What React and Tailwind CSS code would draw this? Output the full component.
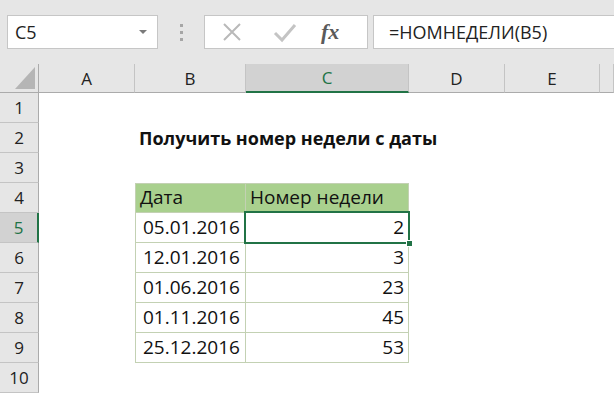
const cols = ["A", "B", "C", "D", "E", ""];
const widths = "grid-cols-[39px_96px_111px_163px_96px_95px_1fr]";

const data = [
  ["05.01.2016", 2],
  ["12.01.2016", 3],
  ["01.06.2016", 23],
  ["01.11.2016", 45],
  ["25.12.2016", 53],
];

function XIcon() {
  return (
    <svg width="22" height="22" viewBox="0 0 22 22">
      <path d="M3 3 L19 19 M19 3 L3 19" stroke="#b9b9b9" strokeWidth="2" fill="none" />
    </svg>
  );
}

function CheckIcon() {
  return (
    <svg width="24" height="22" viewBox="0 0 24 22">
      <path d="M2 12 L9 19 L22 4" stroke="#c4c4c4" strokeWidth="3" fill="none" />
    </svg>
  );
}

function Cell({ r, c }) {
  // r: row number 1..10, c: column index 0..5 (A..F)
  const inTable = r >= 4 && r <= 9 && (c === 1 || c === 2);
  let cls = "relative flex items-end overflow-visible";
  let content = null;

  if (inTable) {
    cls += " border-b border-r border-[#c3d1b3]";
    if (c === 1) cls += " border-l";
    if (r === 4) cls += " bg-[#a9d08e] border-t";
    if (r === 4) {
      content = <span className="pl-[4px] pb-[1px]">{c === 1 ? "Дата" : "Номер недели"}</span>;
    } else {
      const row = data[r - 5];
      content =
        c === 1 ? (
          <span className="pl-[7px] pb-[1px]">{row[0]}</span>
        ) : (
          <span className="ml-auto pr-[4px] pb-[1px]">{row[1]}</span>
        );
    }
  }
  if (r === 2 && c === 1) {
    content = (
      <span className="pl-[4px] pb-[1px] whitespace-nowrap font-bold text-[18px] text-[#111]">
        Получить номер недели с даты
      </span>
    );
  }

  return (
    <div className={cls}>
      {content}
      {r === 5 && c === 2 && (
        <div className="absolute left-[-2px] top-[-2px] right-[-2px] bottom-[-2px] border-2 border-[#217346] z-10">
          <div className="absolute right-[-5px] bottom-[-5px] w-[7px] h-[7px] bg-[#217346] border border-white" />
        </div>
      )}
    </div>
  );
}

export default function App() {
  const rows = [1, 2, 3, 4, 5, 6, 7, 8, 9, 10];
  return (
    <div className="w-[614px] h-[394px] overflow-hidden bg-white text-[#111] font-['Open_Sans',sans-serif] text-[19px]">
      {/* formula bar */}
      <div className="h-[64px] bg-[#e6e6e6] flex items-start pt-[15px] pl-[7px]">
        <div className="w-[151px] h-[34px] bg-white border border-[#c6c6c6] flex items-center pl-[7px] pr-[10px]">
          <span className="text-[18px] text-[#222]">C5</span>
          <span className="ml-auto w-0 h-0 border-l-[4px] border-r-[4px] border-t-[4px] border-l-transparent border-r-transparent border-t-[#7a7a7a]" />
        </div>
        <div className="w-[46px] h-[34px] flex flex-col items-center justify-center gap-[4px]">
          <span className="w-[3px] h-[3px] bg-[#a6a6a6]" />
          <span className="w-[3px] h-[3px] bg-[#a6a6a6]" />
          <span className="w-[3px] h-[3px] bg-[#a6a6a6]" />
        </div>
        <div className="w-[164px] h-[34px] bg-white border border-[#c6c6c6] flex items-center pl-[16px]">
          <XIcon />
          <span className="ml-[30px]">
            <CheckIcon />
          </span>
          <span className="ml-[24px] font-['Liberation_Serif',serif] italic font-bold text-[22px] text-[#5a5a5a] leading-none">
            fx
          </span>
        </div>
        <div className="ml-[5px] flex-1 h-[34px] bg-white border border-r-0 border-[#c6c6c6] flex items-center pl-[15px]">
          <span className="text-[18px] text-[#222]">=НОМНЕДЕЛИ(B5)</span>
        </div>
      </div>

      {/* sheet */}
      <div className={`grid ${widths} grid-rows-[29px_repeat(10,30px)]`}>
        {/* column header row */}
        <div className="bg-[#e6e6e6] border-b border-r border-[#ababab] flex items-end justify-end pr-[3px] pb-[3px]">
          <span className="w-0 h-0 border-l-[20px] border-t-[22px] border-l-transparent border-t-transparent border-b-0 border-r-0 relative">
            <span className="absolute right-0 bottom-0 w-0 h-0 border-l-[20px] border-b-[22px] border-l-transparent border-b-[#b5b5b5]" />
          </span>
        </div>
        {cols.map((c, i) => (
          <div
            key={i}
            className={
              i === 2
                ? "bg-[#d2d2d2] border-b-2 border-b-[#217346] border-r border-r-[#c4c4c4] flex items-center justify-center pt-[1px] text-[17px] text-[#217346]"
                : "bg-[#e6e6e6] border-b border-b-[#ababab] border-r border-r-[#c4c4c4] flex items-center justify-center pt-[1px] text-[17px] text-[#222]"
            }
          >
            {c}
          </div>
        ))}

        {rows.map((r) => (
          <div key={r} className="contents">
            <div
              className={
                r === 5
                  ? "bg-[#d2d2d2] border-b border-b-[#c4c4c4] border-r-2 border-r-[#217346] flex items-center justify-center text-[17px] text-[#217346]"
                  : "bg-[#e6e6e6] border-b border-b-[#c4c4c4] border-r border-r-[#ababab] flex items-center justify-center text-[17px] text-[#222]"
              }
            >
              {r}
            </div>
            {cols.map((_, ci) => (
              <Cell key={ci} r={r} c={ci} />
            ))}
          </div>
        ))}
      </div>
    </div>
  );
}
